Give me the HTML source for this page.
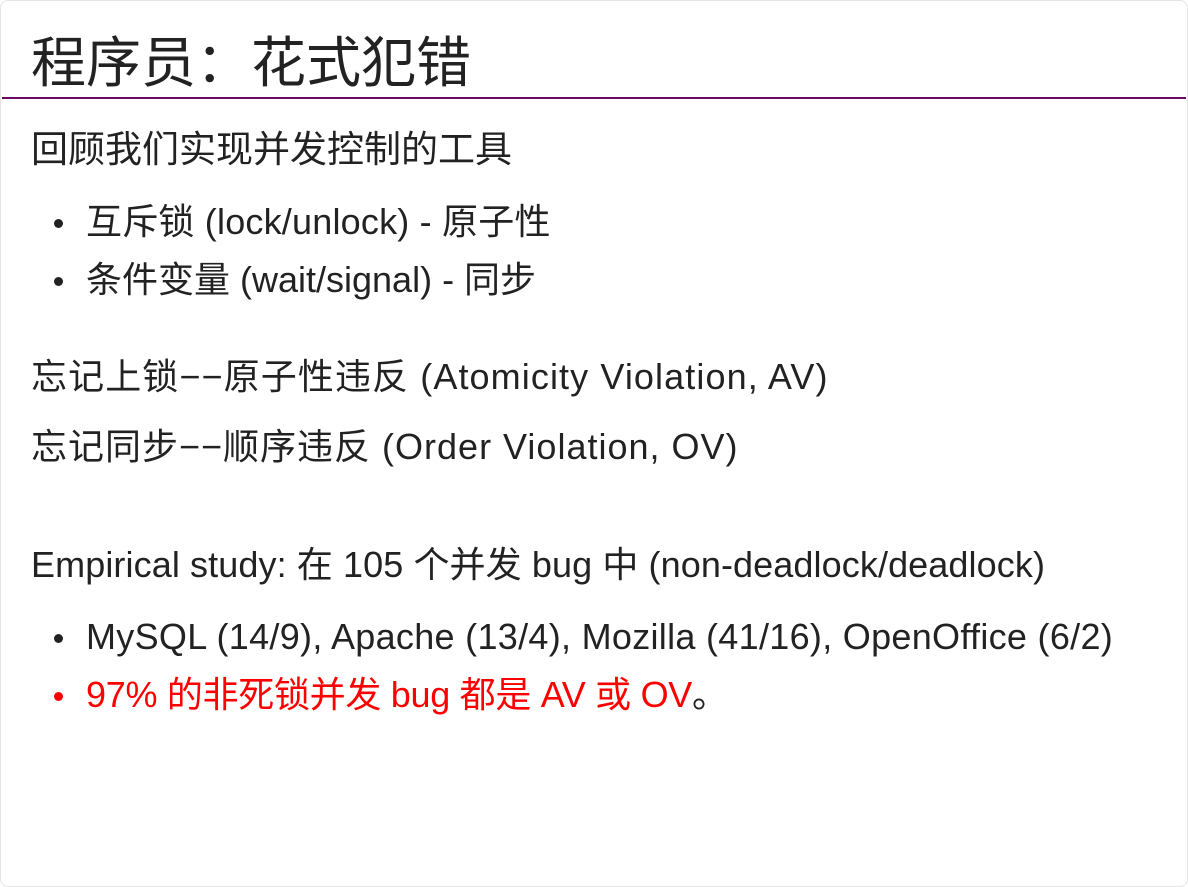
<!DOCTYPE html>
<html><head><meta charset="utf-8"><style>
body{margin:0;width:1188px;height:887px;background:#fff;position:relative;overflow:hidden;font-family:"Liberation Sans","Noto Sans CJK SC",sans-serif;color:#222;}
.frame{position:absolute;left:0;top:0;width:1186px;height:885px;border:1px solid #e4e4e4;border-radius:8px;}
h1{position:absolute;left:31px;top:22px;margin:0;font-weight:normal;font-size:55px;line-height:72px;color:#222;font-family:"Noto Sans CJK SC",sans-serif;}
.rule{position:absolute;left:2px;right:2px;top:97px;height:2px;background:#6b0a63;}
.l{position:absolute;left:31px;font-size:36px;line-height:40px;white-space:nowrap;}
.l.cj{font-size:37px;}
.b{left:86px;}
.b::before{content:"";position:absolute;left:-32px;top:17px;width:9px;height:9px;border-radius:50%;background:#222;}
.red{color:#f00;}
.red::before{background:#f00;}
</style></head><body>
<div class="frame"></div>
<h1>程序员：花式犯错</h1>
<div class="rule"></div>
<div class="l cj" style="top:130px">回顾我们实现并发控制的工具</div>
<div class="l b" style="top:202px;letter-spacing:0.2px">互斥锁 (lock/unlock) - 原子性</div>
<div class="l b" style="top:260px">条件变量 (wait/signal) - 同步</div>
<div class="l" style="top:357px;letter-spacing:1.1px">忘记上锁−−原子性违反 (Atomicity Violation, AV)</div>
<div class="l" style="top:427px;letter-spacing:1px">忘记同步−−顺序违反 (Order Violation, OV)</div>
<div class="l" style="top:545px;letter-spacing:0.1px">Empirical study: 在 105 个并发 bug 中 (non-deadlock/deadlock)</div>
<div class="l b" style="top:617px;letter-spacing:0.3px">MySQL (14/9), Apache (13/4), Mozilla (41/16), OpenOffice (6/2)</div>
<div class="l b red" style="top:675px;letter-spacing:-0.3px">97% 的非死锁并发 bug 都是 AV 或 OV<span style="color:#222">。</span></div>
</body></html>
